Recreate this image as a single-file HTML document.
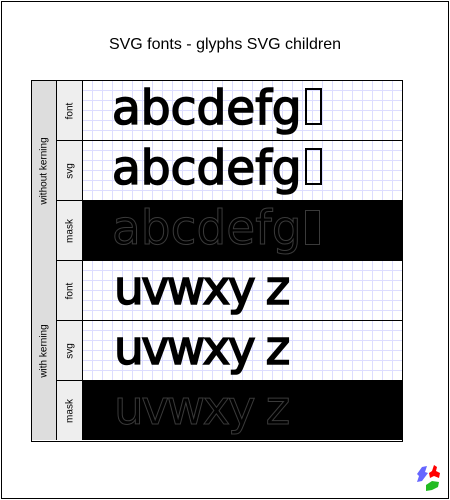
<!DOCTYPE html>
<html><head><style>
body{margin:0;width:450px;height:500px;background:#fff;position:relative;overflow:hidden;font-family:"Liberation Sans",sans-serif}
.frame{position:absolute;left:1px;top:1px;width:446px;height:496px;border:1px solid #000}
.title{position:absolute;left:0;width:450px;top:36px;text-align:center;font-size:16px}
.tbl{position:absolute;left:31px;top:80px;width:370px;height:360px;border:1px solid #000}
.c1{position:absolute;left:0;width:24px;height:180px;background:#ddd;border-right:1px solid #000;border-bottom:1px solid #000}
.c2{position:absolute;left:25px;width:25px;height:59px;background:#eee;border-right:1px solid #000;border-bottom:1px solid #000}
.lab{position:absolute;left:50%;top:50%;transform:translate(-50%,-50%) rotate(-90deg);font-size:10px;white-space:nowrap}
.cell{position:absolute;left:51px;width:319px;height:59px;border-bottom:1px solid #000;
background-color:#fff;background-image:repeating-linear-gradient(90deg,transparent 0 9px,#ddf 9px 10px),repeating-linear-gradient(0deg,transparent 0 9px,#ddf 9px 10px);overflow:hidden}
.cell.m{background:#000}
.t{position:absolute;left:29px;top:-2px;font-family:"DejaVu Sans",sans-serif;font-size:47px;line-height:60px;color:#000;white-space:pre;-webkit-text-stroke:1.6px #000}
.k{left:31px;letter-spacing:-2.5px}
.m .t{color:#000;-webkit-text-stroke:1px #3a3a3a}
.box{display:inline-block;width:13px;height:33px;border:2px solid #000;vertical-align:-1px;margin-left:3px}
.m .box{border:1px solid #3a3a3a}
</style></head><body>
<div class="frame"></div>
<div class="title">SVG fonts - glyphs SVG children</div>
<div class="tbl">
<div class="c1" style="top:0"><div class="lab">without kerning</div></div>
<div class="c1" style="top:180px;height:179px;border-bottom:none"><div class="lab">with kerning</div></div>
<div class="c2" style="top:0"><div class="lab">font</div></div>
<div class="c2" style="top:60px"><div class="lab">svg</div></div>
<div class="c2" style="top:120px"><div class="lab">mask</div></div>
<div class="c2" style="top:180px"><div class="lab">font</div></div>
<div class="c2" style="top:240px"><div class="lab">svg</div></div>
<div class="c2" style="top:300px;border-bottom:none"><div class="lab">mask</div></div>
<div class="cell" style="top:0"><div class="t">abcdefg<span class="box"></span></div></div>
<div class="cell" style="top:60px"><div class="t">abcdefg<span class="box"></span></div></div>
<div class="cell m" style="top:120px"><div class="t">abcdefg<span class="box"></span></div></div>
<div class="cell" style="top:180px"><div class="t k">uvwxy z</div></div>
<div class="cell" style="top:240px"><div class="t k">uvwxy z</div></div>
<div class="cell m" style="top:300px;border-bottom:none"><div class="t k">uvwxy z</div></div>
</div>
<svg style="position:absolute;left:414px;top:465px" width="30" height="30" viewBox="0 0 30 30">
<path d="M8 2 L13 1 L11 7 L14 8 L8 16 L3 17 L5 11 L3 9 Z" fill="#6666ff"/>
<path d="M20 0 L23 2 L22 6 L26 8 L25 13 L20 11 L16 13 L15 8 L18 6 Z" fill="#ff0000"/>
<path d="M12 20 L18 16 L25 17 L24 22 L18 25 L12 26 Z" fill="#22bb22"/>
</svg>
</body></html>
